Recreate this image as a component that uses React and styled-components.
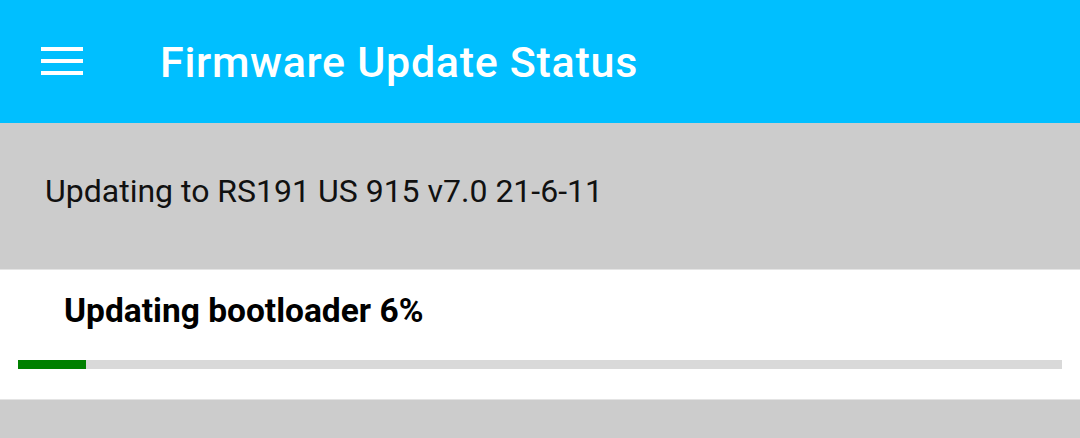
import React from 'react';
import styled, { createGlobalStyle } from 'styled-components';

const GlobalStyle = createGlobalStyle`
  body {
    margin: 0;
    background: #cccccc;
    font-family: Roboto, 'Noto Sans', sans-serif;
  }
`;

const MenuIcon = () => (
  <svg width='42' height='28' viewBox='0 0 42 28'>
    <rect x='0' y='0' width='42' height='4' fill='#fff' />
    <rect x='0' y='12' width='42' height='4' fill='#fff' />
    <rect x='0' y='24' width='42' height='4' fill='#fff' />
  </svg>
);

const App = ({ target = 'RS191 US 915 v7.0 21-6-11', stage = 'bootloader', progress = 0.065 }) => (
  <Page>
    <GlobalStyle />
    <Toolbar>
      <MenuButton>
        <MenuIcon />
      </MenuButton>
      <Title>Firmware Update Status</Title>
    </Toolbar>

    <Banner>Updating to {target}</Banner>

    <Card>
      <Stage>
        Updating {stage} {Math.floor(progress * 100)}%
      </Stage>
      <Track>
        <Fill style={{ width: `${progress * 100}%` }} />
      </Track>
    </Card>
  </Page>
);

export default App;

const Page = styled.div`
  display: flex;
  flex-direction: column;
  min-height: 100vh;
  background: #cccccc;
`;

const Toolbar = styled.header`
  display: flex;
  align-items: center;
  height: 123px;
  background: #00bfff;
  color: #fff;
`;

const MenuButton = styled.div`
  display: flex;
  align-items: center;
  justify-content: center;
  width: 42px;
  margin: -1px 77px 0 41px;
`;

const Title = styled.h1`
  margin: 0;
  padding-top: 1px;
  font-size: 43px;
  line-height: 1;
  font-weight: 500;
  letter-spacing: 0.7px;
`;

const Banner = styled.div`
  box-sizing: border-box;
  height: 146px;
  padding: 52px 45px 0;
  font-size: 32px;
  line-height: 32px;
  color: #111;
`;

const Card = styled.section`
  display: flex;
  flex-direction: column;
  height: 131px;
  box-sizing: border-box;
  background: #fff;
  border-top: 1px solid #e4e4e4;
  border-bottom: 1px solid #e4e4e4;
  padding: 24px 18px 0;
`;

const Stage = styled.div`
  padding-left: 46px;
  font-size: 33.5px;
  line-height: 33px;
  font-weight: 700;
  color: #000;
`;

const Track = styled.div`
  margin-top: 33px;
  height: 9px;
  background: #d9d9d9;
`;

const Fill = styled.div`
  height: 100%;
  background: #008000;
`;
